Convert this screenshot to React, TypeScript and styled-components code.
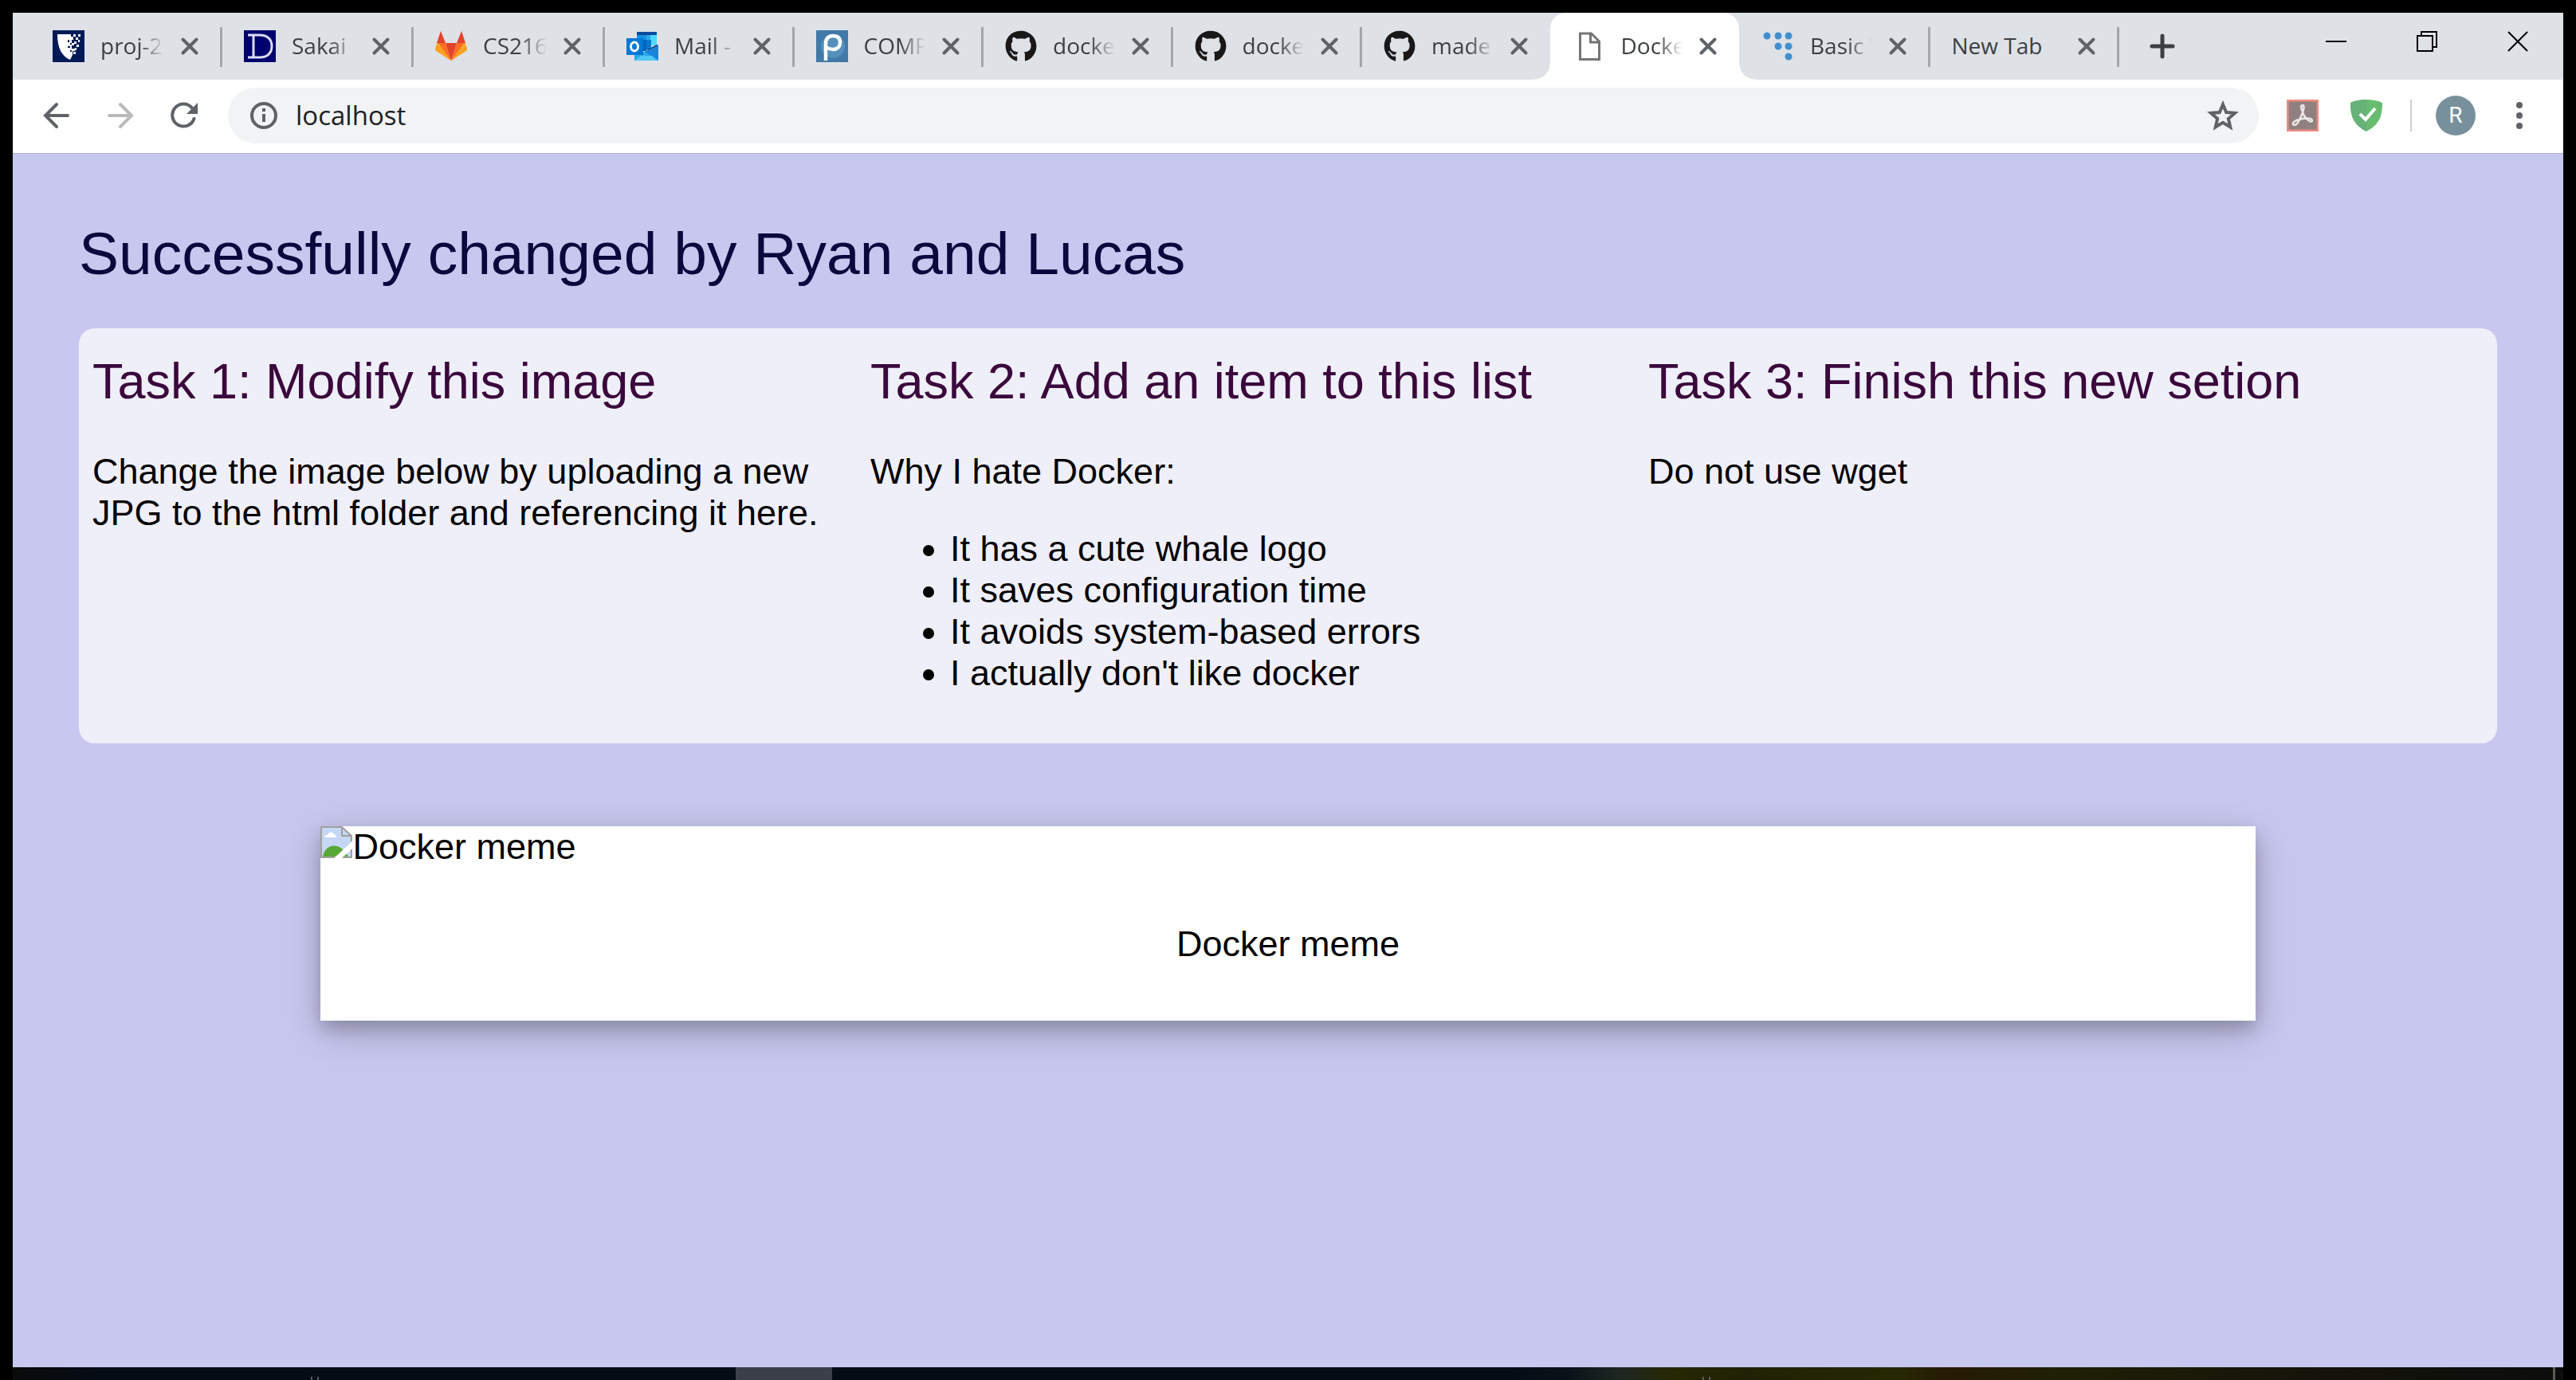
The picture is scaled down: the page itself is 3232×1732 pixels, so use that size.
import React from 'react';
import styled, { createGlobalStyle, css } from 'styled-components';
import { FaGithub } from 'react-icons/fa';

const GlobalStyle = createGlobalStyle`
  * { box-sizing: border-box; }
  body { margin: 0; background: #000; }
  button { border: 0; padding: 0; background: none; font: inherit; color: inherit; }
`;

const uiFont = '"Open Sans", "Noto Sans", sans-serif';

const Screen = styled.div`
  min-height: 100vh;
  padding: 16px 16px 0;
  display: flex;
  flex-direction: column;
  background: #000;
  font-family: ${uiFont};
`;

const TabStrip = styled.header`
  display: flex;
  height: 84px;
  padding-left: 21px;
  background: #dee1e6;
`;

const TabList = styled.div`
  display: grid;
  grid-template-columns: repeat(3, 240px) repeat(8, minmax(0, 1fr));
  flex: 0 1 2620px;
`;

const TabItem = styled.div<{ $active?: boolean; $rule?: boolean }>`
  position: relative;
  display: flex;
  align-items: center;
  padding: 0 24px 0 29px;
  color: #3c4043;
  ${(p) =>
    p.$rule &&
    css`
      &::after {
        content: '';
        position: absolute;
        right: -2px;
        top: 18px;
        width: 3px;
        height: 50px;
        background: #a3a6ab;
      }
    `}
  ${(p) =>
    p.$active &&
    css`
      background: #fff;
      border-radius: 20px 20px 0 0;
      &::before,
      &::after {
        content: '';
        position: absolute;
        bottom: 0;
        width: 20px;
        height: 20px;
      }
      &::before {
        right: 100%;
        background: radial-gradient(circle at 0 0, transparent 19px, #fff 20px);
      }
      &::after {
        left: 100%;
        background: radial-gradient(circle at 100% 0, transparent 19px, #fff 20px);
      }
    `}
`;

const Favicon = styled.span`
  flex: none;
  width: 40px;
  height: 40px;
  margin-right: 20px;
  svg { display: block; width: 40px; height: 40px; }
`;

const TabTitle = styled.button<{ $full?: boolean }>`
  flex: 1;
  min-width: 0;
  overflow: hidden;
  white-space: nowrap;
  text-align: left;
  padding-bottom: 2px;
  font-size: 28px;
  line-height: 40px;
  ${(p) =>
    !p.$full &&
    css`
      mask-image: linear-gradient(to right, #000 calc(100% - 32px), transparent);
    `}
`;

const CloseTab = styled.button`
  flex: none;
  width: 30px;
  height: 30px;
  margin-left: 17px;
  svg { display: block; }
`;

const NewTab = styled.button`
  width: 60px;
  margin-left: 26px;
  display: grid;
  place-items: center;
`;

const WindowButtons = styled.div`
  display: flex;
  margin-left: auto;
  height: 72px;
`;

const WindowButton = styled.button`
  width: 114px;
  display: grid;
  place-items: center;
`;

const Toolbar = styled.nav`
  display: flex;
  align-items: center;
  height: 93px;
  padding: 0 30px 2px;
  background: #fff;
  border-bottom: 1px solid #b3b1c6;
`;

const NavButton = styled.button`
  width: 50px;
  height: 50px;
  margin-right: 30px;
  display: grid;
  place-items: center;
`;

const Omnibox = styled.form`
  flex: 1;
  display: flex;
  align-items: center;
  height: 70px;
  padding: 0 25px;
  border-radius: 35px;
  background: #f1f3f4;
`;

const Address = styled.input`
  flex: 1;
  min-width: 0;
  margin: 0 20px;
  padding: 0;
  border: 0;
  background: none;
  color: #202124;
  font-family: ${uiFont};
  font-size: 33px;
  line-height: 44px;
`;

const ToolGroup = styled.div`
  display: flex;
  align-items: center;
  margin-left: 35px;
`;

const ToolButton = styled.button`
  width: 40px;
  height: 40px;
  margin-right: 40px;
  svg { display: block; }
`;

const ToolRule = styled.span`
  width: 2px;
  height: 40px;
  margin: 0 30px 0 -5px;
  background: #ccced1;
`;

const Avatar = styled.button`
  width: 50px;
  height: 50px;
  margin-right: 30px;
  border-radius: 50%;
  background: #78909c;
  color: #fff;
  font-family: Roboto, sans-serif;
  font-size: 28px;
  line-height: 50px;
`;

const MenuButton = styled.button`
  width: 50px;
  height: 50px;
  display: grid;
  place-items: center;
`;

const Page = styled.main`
  flex: 1;
  padding: 82px 83px 0;
  background: #c8c7ef;
  color: #000;
  font-family: Arial, "Liberation Sans", sans-serif;
  font-size: 45px;
  line-height: 52px;
`;

const PageTitle = styled.h1`
  margin: 0 0 51px;
  color: #08083c;
  font-size: 75px;
  font-weight: 400;
  line-height: 86px;
`;

const Tasks = styled.section`
  display: grid;
  grid-template-columns: repeat(3, minmax(0, 1fr));
  gap: 50px;
  padding: 30px 139px 62px 17px;
  border-radius: 20px;
  background: #efeff9;
`;

const TaskTitle = styled.h2`
  margin: 0 0 52px;
  color: #3a083c;
  font-size: 63px;
  font-weight: 400;
  line-height: 72px;
  white-space: nowrap;
`;

const Text = styled.p`
  margin: 0;
`;

const List = styled.ul`
  margin: 45px 0 0;
  padding-left: 100px;
`;

const Meme = styled.figure`
  width: 80%;
  margin: 104px auto 0;
  padding-bottom: 70px;
  background: #fff;
  box-shadow: 0 10px 20px rgba(0, 0, 0, 0.2), 0 15px 50px rgba(0, 0, 0, 0.19);
`;

const MissingImage = styled.div`
  display: flex;
  align-items: flex-start;
  svg { display: block; flex: none; }
`;

const Caption = styled.figcaption`
  margin-top: 70px;
  text-align: center;
`;

const Taskbar = styled.footer`
  display: flex;
  align-items: flex-end;
  height: 16px;
  background: linear-gradient(
    to right,
    #0a0a0a 0,
    #040c16 4%,
    #040c16 59%,
    #0a1218 61%,
    #1e2622 63%,
    #262803 65%,
    #1f2204 68%,
    #262803 74%,
    #261a04 76%,
    #1f2004 80%,
    #14140a 90%,
    #0c0c0c 100%
  );
`;

const TaskbarMark = styled.span<{ $before: number }>`
  width: 10px;
  height: 4px;
  margin-left: ${(p) => p.$before}px;
  border: solid #5a5d60;
  border-width: 0 2px;
`;

const TaskbarApp = styled.span`
  width: 121px;
  height: 16px;
  margin-left: 523px;
  background: #3b3f49;
`;

const TaskbarRule = styled.span`
  width: 3px;
  height: 16px;
  margin: 0 10px 0 auto;
  background: #5a5a55;
`;

const CloseIcon = () => (
  <svg width="30" height="30" viewBox="0 0 30 30" stroke="#5f6368" strokeWidth="4" strokeLinecap="round">
    <path d="M6.500 6.500l17 17M23.500 6.500l-17 17" />
  </svg>
);

const ShieldFavicon = () => (
  <svg viewBox="0 0 40 40">
    <path fill="#001a57" d="M0 0h40v40H0z" />
    <path fill="#fff" d="M6 5h17v3h3v4h-2v4h3v3h-3v4h4v3h-3v5l-3 6c-10-4-16-14-16-32z" />
    <path fill="#fff" d="M26 5h3v3h-3zM32 5h3v3h-3zM29 9h3v3h-3zM32 12h2v3h-2zM27 14h3v3h-3zM30 18h3v3h-3zM28 22h2v3h-2zM26 27h3v3h-3z" />
    <path fill="#001a57" d="M19 12h2v3h-2zM22 16h2v2h-2zM19 20h3v2h-3zM22 25h2v2h-2z" />
  </svg>
);

const SakaiFavicon = () => (
  <svg viewBox="0 0 40 40">
    <path fill="#00006e" d="M0 0h40v40H0z" />
    <path fill="none" stroke="#dcdcf5" strokeWidth="3" d="M5 6h15c9 0 15 5 15 14s-6 14-15 14H5M12 6v28" />
  </svg>
);

const OutlookFavicon = () => (
  <svg viewBox="0 0 40 40">
    <path fill="#0a4c9c" d="M13 2h25v4H13z" />
    <path fill="#1490df" d="M13 6h12v12H13z" />
    <path fill="#28a8ea" d="M25 6h13v6H25z" />
    <path fill="#50d9ff" d="M30 6h8v13h-8z" />
    <path fill="#0364b8" d="M13 12h12v14H13z" />
    <path fill="#0078d4" d="M25 12h6v12h-6z" />
    <path fill="#123b6d" d="M25 25l13-7 2 1v6H25z" />
    <path fill="#28a8ea" d="M10 23l14 5 16-9v19H10z" />
    <path fill="#1a84dc" d="M40 19v18L22 27z" />
    <path fill="#50c8f5" d="M10 38l8-6h14l6 6z" />
    <path fill="#0078d4" d="M0 10h21v21H0z" />
    <ellipse cx="10" cy="20.500" rx="4.500" ry="5.500" fill="none" stroke="#fff" strokeWidth="3" />
  </svg>
);

const PiazzaFavicon = () => (
  <svg viewBox="0 0 40 40">
    <path fill="#4179a8" d="M0 0h40v40H0z" />
    <circle cx="21" cy="20" r="15" fill="#5490bb" />
    <path fill="none" stroke="#fff" strokeWidth="4.500" d="M12 38V17c0-7 4-10 9-10 6 0 9 3 9 8 0 6-4 9-9 9-4 0-6-1-9-3" />
  </svg>
);

const FileFavicon = () => (
  <svg viewBox="0 0 40 40" fill="none" stroke="#757575" strokeWidth="3">
    <path d="M8.500 4h14l10 10v22.500h-24zM21.500 4v11h11" />
  </svg>
);

const DotsFavicon = () => (
  <svg viewBox="0 0 40 40" fill="#438fce">
    {[[6, 7], [20, 7], [33, 7], [20, 20], [33, 20], [33, 33]].map(([x, y]) => (
      <circle key={`${x}-${y}`} cx={x} cy={y} r="4.500" />
    ))}
  </svg>
);

const GitlabFavicon = () => (
  <svg viewBox="0 0 40 40">
    <path fill="#fc6d26" d="M3 15l10 1 7 22L1 25c-1-1-1-2 0-4zM37 15l-10 1-7 22 19-13c1-1 1-2 0-4z" />
    <path fill="#fca326" d="M3 15L0 23c0 1 0 2 1 3l19 12zM37 15l3 8c0 1 0 2-1 3L20 38z" />
    <path fill="#e24329" d="M13 16h14l-7 22zM7 1l6 15H2zM33 1l-6 15h11z" />
  </svg>
);

interface TabData {
  title: string;
  icon?: React.ReactNode;
  active?: boolean;
  rule?: boolean;
}

const github = <FaGithub color="#191717" />;

const tabs: TabData[] = [
  { title: 'proj-2', icon: <ShieldFavicon />, rule: true },
  { title: 'Sakai :', icon: <SakaiFavicon />, rule: true },
  { title: 'CS216', icon: <GitlabFavicon />, rule: true },
  { title: 'Mail -', icon: <OutlookFavicon />, rule: true },
  { title: 'COMP', icon: <PiazzaFavicon />, rule: true },
  { title: 'docke', icon: github, rule: true },
  { title: 'docke', icon: github, rule: true },
  { title: 'made', icon: github },
  { title: 'Docke', icon: <FileFavicon />, active: true },
  { title: 'Basic V', icon: <DotsFavicon />, rule: true },
  { title: 'New Tab', rule: true },
];

const reasons = [
  'It has a cute whale logo',
  'It saves configuration time',
  'It avoids system-based errors',
  "I actually don't like docker",
];

export default function App() {
  return (
    <Screen>
      <GlobalStyle />
      <TabStrip>
        <TabList>
          {tabs.map((tab, i) => (
            <TabItem key={i} $active={tab.active} $rule={tab.rule}>
              {tab.icon && <Favicon>{tab.icon}</Favicon>}
              <TabTitle $full={!tab.icon}>{tab.title}</TabTitle>
              <CloseTab aria-label="Close tab">
                <CloseIcon />
              </CloseTab>
            </TabItem>
          ))}
        </TabList>
        <NewTab aria-label="New tab">
          <svg width="34" height="34" viewBox="0 0 34 34" stroke="#3c4043" strokeWidth="5" strokeLinecap="round">
            <path d="M17 4v26M4 17h26" />
          </svg>
        </NewTab>
        <WindowButtons>
          <WindowButton aria-label="Minimize">
            <svg width="26" height="26" viewBox="0 0 26 26">
              <path d="M0 12h26v2H0z" />
            </svg>
          </WindowButton>
          <WindowButton aria-label="Restore">
            <svg width="26" height="26" viewBox="0 0 26 26" fill="none" stroke="#000" strokeWidth="2">
              <path d="M1 6h19v19H1zM6 6V1h19v19h-5" />
            </svg>
          </WindowButton>
          <WindowButton aria-label="Close">
            <svg width="26" height="26" viewBox="0 0 26 26" stroke="#000" strokeWidth="2">
              <path d="M1 1l24 24M25 1L1 25" />
            </svg>
          </WindowButton>
        </WindowButtons>
      </TabStrip>
      <Toolbar>
        <NavButton aria-label="Back">
          <svg width="34" height="34" viewBox="0 0 34 34" fill="none" stroke="#5f6368" strokeWidth="4" strokeLinecap="round">
            <path d="M17 3L3 17l14 14M3 17h28" />
          </svg>
        </NavButton>
        <NavButton aria-label="Forward">
          <svg width="34" height="34" viewBox="0 0 34 34" fill="none" stroke="#bababa" strokeWidth="4" strokeLinecap="round">
            <path d="M17 3l14 14-14 14M31 17H3" />
          </svg>
        </NavButton>
        <NavButton aria-label="Reload">
          <svg width="34" height="34" viewBox="0 0 34 34">
            <path d="M29.500 21A14 14 0 1 1 27 7.500" fill="none" stroke="#5f6368" strokeWidth="4" strokeLinecap="round" />
            <path d="M34 1v14H20z" fill="#5f6368" />
          </svg>
        </NavButton>
        <Omnibox onSubmit={(e) => e.preventDefault()}>
          <svg width="40" height="40" viewBox="0 0 40 40" fill="none" stroke="#5f6368" strokeWidth="4">
            <circle cx="20" cy="20" r="15" />
            <path d="M20 18v10M20 11v4" />
          </svg>
          <Address aria-label="Address" defaultValue="localhost" />
          <svg width="40" height="40" viewBox="0 0 40 40" fill="none" stroke="#5f6368" strokeWidth="4">
            <path d="M20 6l4.200 10 10.800.9-8.200 7.100 2.500 10.500L20 28.900 10.700 34.500l2.500-10.500L5 16.900l10.800-.9z" />
          </svg>
        </Omnibox>
        <ToolGroup>
          <ToolButton aria-label="Acrobat">
            <svg width="40" height="40" viewBox="0 0 40 40">
              <path fill="#ec8c80" d="M0 0h40v40H0z" />
              <path fill="#918080" d="M2.500 2.500h35v35h-35z" />
              <path
                fill="none"
                stroke="#ece7e7"
                strokeWidth="2.500"
                d="M20 15c-3-5-2-8 0-8s2 4 0 9c-3 8-7 16-10 16-4 0-3-5 6-7 8-2 16-2 16 1 0 4-8 0-12-10z"
              />
            </svg>
          </ToolButton>
          <ToolButton aria-label="Ad blocker">
            <svg width="40" height="40" viewBox="0 0 40 40">
              <path fill="#68bc71" d="M20 0c7 0 14 1 20 4 0 16-3 27-20 36C3 31 0 20 0 4 6 1 13 0 20 0z" />
              <path fill="#67b279" d="M20 0v40C3 31 0 20 0 4 6 1 13 0 20 0z" />
              <path fill="none" stroke="#fff" strokeWidth="4" d="M12 18l7 7 12-14" />
            </svg>
          </ToolButton>
          <ToolRule />
          <Avatar aria-label="Profile">R</Avatar>
          <MenuButton aria-label="Menu">
            <svg width="34" height="34" viewBox="0 0 34 34" fill="#5f6368">
              <circle cx="17" cy="4" r="4" />
              <circle cx="17" cy="17" r="4" />
              <circle cx="17" cy="30" r="4" />
            </svg>
          </MenuButton>
        </ToolGroup>
      </Toolbar>
      <Page>
        <PageTitle>Successfully changed by Ryan and Lucas</PageTitle>
        <Tasks>
          <article>
            <TaskTitle>Task 1: Modify this image</TaskTitle>
            <Text>Change the image below by uploading a new JPG to the html folder and referencing it here.</Text>
          </article>
          <article>
            <TaskTitle>Task 2: Add an item to this list</TaskTitle>
            <Text>Why I hate Docker:</Text>
            <List>
              {reasons.map((r) => (
                <li key={r}>{r}</li>
              ))}
            </List>
          </article>
          <article>
            <TaskTitle>Task 3: Finish this new setion</TaskTitle>
            <Text>Do not use wget</Text>
          </article>
        </Tasks>
        <Meme>
          <MissingImage>
            <svg width="40" height="40" viewBox="0 0 40 40">
              <path fill="#c5d7f5" d="M1 1h26l12 12v26H1z" />
              <path fill="#fff" d="M5 14c0-3 3-3 4-3 1-4 6-5 8-1 3 0 3 4 3 4z" />
              <path fill="#58a836" d="M3 38c3-17 22-19 32 0z" />
              <path fill="#fff" d="M40 19L17 40h10l13-12zM27 0l13 12V0z" />
              <path fill="none" stroke="#a0a0a0" strokeWidth="2" d="M18 39H1V1h26l12 11v7M27 1v11h12M39 29v10H28" />
            </svg>
            <span>Docker meme</span>
          </MissingImage>
          <Caption>Docker meme</Caption>
        </Meme>
      </Page>
      <Taskbar>
        <TaskbarMark $before={374} />
        <TaskbarApp />
        <TaskbarMark $before={1092} />
        <TaskbarRule />
      </Taskbar>
    </Screen>
  );
}
